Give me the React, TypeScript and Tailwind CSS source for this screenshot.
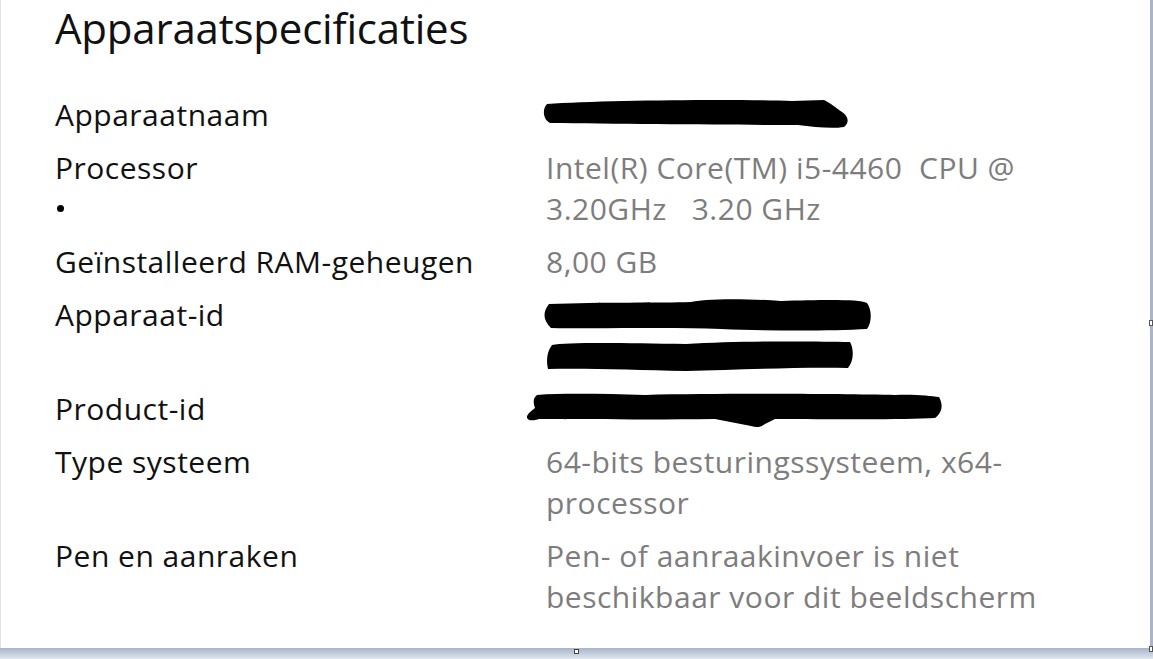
import React from "react";

type Row = { label: string[]; value: React.ReactNode };

const font = { fontFamily: '"Open Sans", "Noto Sans", sans-serif' };

function Scribble({ kind }: { kind: "name" | "id" | "product" }) {
  if (kind === "name") {
    return (
      <svg width="320" height="41" viewBox="0 0 320 41" className="-ml-[4px] block">
        <path
          d="M5 10 C 60 6, 200 5, 250 7 L 282 6 C 290 10, 294 14, 300 18 C 306 22, 308 28, 302 33 C 290 35, 272 33, 256 31 C 200 31, 80 30, 8 29 C 1 26, 0 15, 5 10 Z"
          fill="#000"
        />
      </svg>
    );
  }
  if (kind === "id") {
    return (
      <div className="flex flex-col">
        <svg width="340" height="41" viewBox="0 0 340 41" className="-ml-[5px] block">
          <path
            d="M8 10 C 60 8, 120 9, 150 8 C 160 5, 200 4, 240 7 C 280 6, 318 5, 326 9 C 331 16, 331 28, 326 35 C 290 37, 230 37, 180 35 C 130 33, 60 35, 10 34 C 4 28, 0 20, 8 10 Z"
            fill="#000"
          />
        </svg>
        <svg width="320" height="41" viewBox="0 0 320 41" className="block">
          <path
            d="M6 10 C 20 7, 80 8, 140 9 C 190 6, 260 6, 304 7 C 308 14, 308 26, 302 33 C 250 32, 190 35, 140 36 C 90 35, 40 33, 2 34 C 0 26, 1 16, 6 10 Z"
            fill="#000"
          />
        </svg>
      </div>
    );
  }
  return (
    <svg width="430" height="41" viewBox="0 0 430 41" className="-ml-[21px] block">
      <path
        d="M12 7 C 40 5, 80 6, 120 7 C 200 5, 320 6, 370 7 C 390 6, 405 8, 414 9 C 418 16, 418 24, 410 30 C 380 32, 300 31, 250 31 L 240 36 C 236 39, 232 40, 226 38 L 190 31 C 120 32, 60 31, 14 31 C 8 33, 1 33, 2 28 C 4 24, 8 22, 10 20 C 8 14, 8 10, 12 7 Z"
        fill="#000"
      />
    </svg>
  );
}

const rows: Row[] = [
  { label: ["Apparaatnaam"], value: <Scribble kind="name" /> },
  {
    label: ["Processor", "•"],
    value: (
      <>
        <span className="block whitespace-pre">Intel(R) Core(TM) i5-4460  CPU @</span>
        <span className="block whitespace-pre">3.20GHz   3.20 GHz</span>
      </>
    ),
  },
  { label: ["Geïnstalleerd RAM-geheugen"], value: <span className="block">8,00 GB</span> },
  { label: ["Apparaat-id"], value: <Scribble kind="id" /> },
  { label: ["Product-id"], value: <Scribble kind="product" /> },
  {
    label: ["Type systeem"],
    value: (
      <>
        <span className="block whitespace-nowrap">64-bits besturingssysteem, x64-</span>
        <span className="block whitespace-nowrap">processor</span>
      </>
    ),
  },
  {
    label: ["Pen en aanraken"],
    value: (
      <>
        <span className="block whitespace-nowrap">Pen- of aanraakinvoer is niet</span>
        <span className="block whitespace-nowrap">beschikbaar voor dit beeldscherm</span>
      </>
    ),
  },
];

export default function App() {
  return (
    <div className="flex h-[659px] w-[1153px] flex-col overflow-hidden bg-white" style={font}>
      <div className="relative flex flex-1">
        <div className="flex-1 border-l border-[#e3e3e3] bg-white pl-[54px]">
          <h1 className="text-[42px] leading-[56px] font-normal tracking-[-0.2px] text-[#111]">
            Apparaatspecificaties
          </h1>
          <div className="mt-[38px] grid grid-cols-[491px_1fr] gap-y-[12px] text-[30px] leading-[41px] tracking-[0.5px]">
            {rows.map((r) => (
              <React.Fragment key={r.label[0]}>
                <div className="text-[#111]">
                  {r.label.map((l) =>
                    l === "•" ? (
                      <div key={l} className="flex h-[41px] items-center pl-[2px]">
                        <span className="block h-[7px] w-[7px] rounded-full bg-black" />
                      </div>
                    ) : (
                      <span key={l} className="block whitespace-nowrap">
                        {l}
                      </span>
                    )
                  )}
                </div>
                <div className="text-[#7d7d7d]">{r.value}</div>
              </React.Fragment>
            ))}
          </div>
        </div>
        <div className="w-[3px] bg-[#aab5c7]" />
        <span className="absolute right-0 top-[320px] h-[6px] w-[4px] border border-[#555] bg-white" />
      </div>
      <div className="relative h-[11px] bg-gradient-to-b from-[#a8b5c8] to-[#dfe7f1]">
        <span className="absolute left-[574px] top-[1px] h-[5px] w-[5px] border border-[#444] bg-white" />
        <span className="absolute right-0 top-[-2px] h-[6px] w-[4px] border border-[#555] bg-white" />
      </div>
    </div>
  );
}
